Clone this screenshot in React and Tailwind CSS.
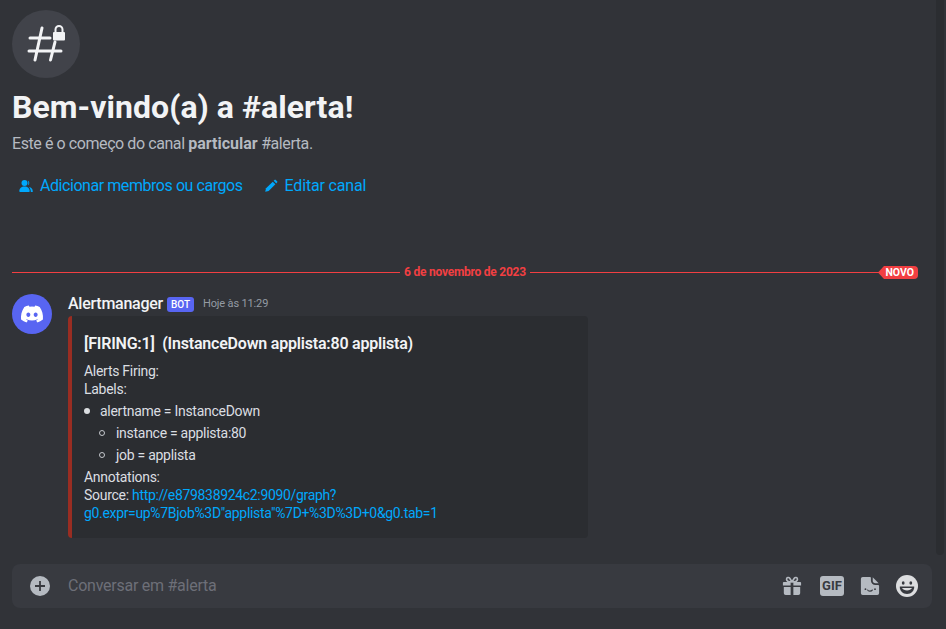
import { FaDiscord } from "react-icons/fa";

function HashLock() {
  return (
    <svg width="42" height="42" viewBox="0 0 42 42" fill="none">
      <path d="M17 5 10 37M30 19 25.500 37M5 15h20M4 28h32" stroke="#f2f3f5" strokeWidth="3" strokeLinecap="round" />
      <rect x="28" y="9" width="12" height="8.500" rx="1" fill="#f2f3f5" />
      <path d="M30.500 10V6.500a3.500 3.500 0 0 1 7 0V10" stroke="#f2f3f5" strokeWidth="2" />
    </svg>
  );
}

function MembersIcon() {
  return (
    <svg className="ml-px mr-[7px]" width="14" height="12" viewBox="0 0 14 12" fill="#00a8fc">
      <circle cx="5.500" cy="3" r="3" />
      <path d="M.3 11.300C.3 8.300 2.400 6.500 5.500 6.500s5.200 1.800 5.200 4.800c0 .4-.3.7-.7.7H1c-.4 0-.7-.3-.7-.7Z" />
      <path d="M8.800.4a3 3 0 0 1 0 5.200c.8-1.500.8-3.700 0-5.200ZM10 7c2.400.5 3.800 2.100 3.800 4.400 0 .3-.2.6-.6.6h-1.400c0-2-.6-3.800-1.800-5Z" />
    </svg>
  );
}

function PencilIcon() {
  return (
    <svg className="mr-[7px]" width="14" height="14" viewBox="0 0 24 24" fill="#00a8fc">
      <path d="M2 22l1.500-6L15 4.500 19.500 9 8 20.500 2 22Z" />
      <path d="M16.500 3 18 1.500a1.500 1.500 0 0 1 2 0L22.500 4a1.500 1.500 0 0 1 0 2L21 7.500 16.500 3Z" />
    </svg>
  );
}

function GiftIcon() {
  return (
    <svg width="20" height="20" viewBox="0 0 22 22" fill="#b5bac1">
      <path d="M1 7.500a1 1 0 0 1 1-1h7.500v4H1v-3ZM12.500 6.500H20a1 1 0 0 1 1 1v3h-8.500v-4ZM2 12h7.500v9H4a2 2 0 0 1-2-2v-7ZM12.500 12H20v7a2 2 0 0 1-2 2h-5.500v-9Z" />
      <path d="M11 6.500 8.500 2.500C7.500 1 5 1.500 5 3.500c0 1.800 2 3 6 3Zm0 0 2.500-4c1-1.500 3.500-1 3.500 1 0 1.800-2 3-6 3Z" fill="none" stroke="#b5bac1" strokeWidth="1.800" />
    </svg>
  );
}

function StickerIcon() {
  return (
    <svg width="20" height="20" viewBox="0 0 22 22">
      <path d="M3 1h8c.6 0 1 .4 1 1v3a5 5 0 0 0 5 5h3c.6 0 1 .4 1 1v8a2 2 0 0 1-2 2H3a2 2 0 0 1-2-2V3a2 2 0 0 1 2-2Z" fill="#b5bac1" />
      <path d="M14 1.500 20.500 8H17a3 3 0 0 1-3-3V1.500Z" fill="#b5bac1" />
      <circle cx="6" cy="14.500" r="1" fill="#383a40" />
      <circle cx="16.500" cy="14.500" r="1" fill="#383a40" />
      <path d="M8.500 15.500c.6 1.600 4 1.600 5 0" stroke="#383a40" strokeWidth="1.300" fill="none" strokeLinecap="round" />
    </svg>
  );
}

function EmojiIcon() {
  return (
    <svg width="22" height="22" viewBox="0 0 22 22">
      <circle cx="11" cy="11" r="11" fill="#dcdddf" />
      <ellipse cx="7.200" cy="8" rx="1.400" ry="1.800" fill="#383a40" />
      <ellipse cx="14.800" cy="8" rx="1.400" ry="1.800" fill="#383a40" />
      <path d="M3.800 11.500h14.400c.4 4-3 7.500-7.200 7.500s-7.600-3.500-7.200-7.500Z" fill="#383a40" />
      <path d="M6 13h10c-.8 1.500-2.800 2.500-5 2.500S6.800 14.500 6 13Z" fill="#dcdddf" />
    </svg>
  );
}

export default function App() {
  return (
    <div className="h-[629px] w-[946px] overflow-hidden bg-[#313338] flex flex-col font-['Roboto',sans-serif]">
      <div className="flex-1 min-h-0 flex">
        <div className="flex-1 min-w-0 overflow-hidden">
          {/* channel header */}
          <div className="pt-[10px] px-3">
            <div className="w-[68px] h-[68px] rounded-full bg-[#41434a] flex items-center justify-center">
              <HashLock />
            </div>
            <h1 className="mt-[9px] text-[32px] leading-10 font-bold tracking-[0.05px] text-[#f2f3f5]">Bem-vindo(a) a #alerta!</h1>
            <p className="mt-[7px] text-[16px] leading-5 tracking-[-0.42px] text-[#b5bac1]">
              Este é o começo do canal <b className="font-bold tracking-[0px]">particular</b> #alerta.
            </p>
            <div className="mt-[22px] flex items-center gap-[21px] pl-[6px] text-[16px] leading-5 text-[#00a8fc]">
              <span className="flex items-center tracking-[-0.44px]"><MembersIcon />Adicionar membros ou cargos</span>
              <span className="flex items-center tracking-[-0.17px]"><PencilIcon />Editar canal</span>
            </div>
          </div>

          {/* new messages divider */}
          <div className="relative mt-[68px] ml-3 w-[906px] h-[16px] flex items-center">
            <div className="flex-1 border-t border-[#f23f42]" />
            <span className="px-1 text-[12px] leading-4 font-bold tracking-[-0.24px] text-[#f23f42]">6 de novembro de 2023</span>
            <div className="flex-1 border-t border-[#f23f42]" />
            <div className="absolute right-0 top-[2px] flex items-center">
              <svg width="6" height="13" viewBox="0 0 6 13"><path d="M0 6.500 6 0v13Z" fill="#f23f42" /></svg>
              <span className="h-[13px] pl-px pr-[4px] rounded-r-[4px] bg-[#f23f42] text-[10.500px] leading-[13px] font-bold text-white">NOVO</span>
            </div>
          </div>

          {/* message */}
          <div className="mt-[14px] flex px-3 gap-4">
            <div className="w-10 h-10 shrink-0 rounded-full bg-[#5865f2] flex items-center justify-center">
              <FaDiscord className="text-white text-[24px]" />
            </div>
            <div className="-mt-px min-w-0">
              <div className="flex items-center h-[22px]">
                <span className="text-[16px] font-medium tracking-[-0.25px] text-[#f2f3f5]">Alertmanager</span>
                <span className="ml-1 h-[15px] w-[27px] text-center rounded-[3px] bg-[#5865f2] text-[10px] leading-[15px] font-medium text-white">BOT</span>
                <span className="ml-[9px] text-[11px] tracking-[-0.15px] text-[#949ba4]">Hoje às 11:29</span>
              </div>
              <div className="mt-px w-[520px] h-[222px] rounded-[4px] border-l-4 border-[#992d22] bg-[#2b2d31] pl-3 pt-[17px] text-[14px] leading-[18px] tracking-[-0.28px] text-[#dbdee1]">
                <div className="text-[16px] leading-[22px] font-semibold tracking-[-0.2px] text-[#f2f3f5]">[FIRING:1]&nbsp; (InstanceDown applista:80 applista)</div>
                <div className="mt-[7px]">Alerts Firing:</div>
                <div>Labels:</div>
                <ul className="mt-[2px]">
                  <li className="flex items-center leading-[22px]">
                    <span className="w-[6px] h-[6px] mr-[10px] rounded-full bg-[#dbdee1]" />alertname = InstanceDown
                  </li>
                  <li className="flex items-center leading-[22px]">
                    <span className="w-[6px] h-[6px] ml-[15px] mr-[11px] rounded-full border-[1.500px] border-[#c4c7cc]" />instance = applista:80
                  </li>
                  <li className="flex items-center leading-[22px]">
                    <span className="w-[6px] h-[6px] ml-[15px] mr-[11px] rounded-full border-[1.500px] border-[#c4c7cc]" />job = applista
                  </li>
                </ul>
                <div className="mt-[2px]">Annotations:</div>
                <div>Source: <span className="tracking-[-0.33px] text-[#00a8fc]">http://e879838924c2:9090/graph?<br />g0.expr=up%7Bjob%3D"applista"%7D+%3D%3D+0&amp;g0.tab=1</span></div>
              </div>
            </div>
          </div>
        </div>
        <div className="w-[8px] mr-[2px] rounded-b-[4px] bg-[#2b2d31]" />
      </div>

      {/* composer */}
      <div className="pl-3 pr-[14px] pb-[21px] pt-[9px]">
        <div className="h-[44px] rounded-lg bg-[#383a40] flex items-center pl-[18px] pr-[14px]">
          <div className="w-5 h-5 rounded-full bg-[#b5bac1] flex items-center justify-center">
            <svg width="12" height="12" viewBox="0 0 12 12"><path d="M6 1v10M1 6h10" stroke="#383a40" strokeWidth="1.800" /></svg>
          </div>
          <span className="ml-[18px] text-[16px] tracking-[-0.25px] text-[#6d6f78]">Conversar em #alerta</span>
          <div className="ml-auto flex items-center gap-4">
            <span className="mr-[2px]"><GiftIcon /></span>
            <span className="w-6 h-5 rounded-[3px] bg-[#b5bac1] text-[13px] leading-5 text-center font-bold text-[#383a40]">GIF</span>
            <StickerIcon />
            <EmojiIcon />
          </div>
        </div>
      </div>
    </div>
  );
}
